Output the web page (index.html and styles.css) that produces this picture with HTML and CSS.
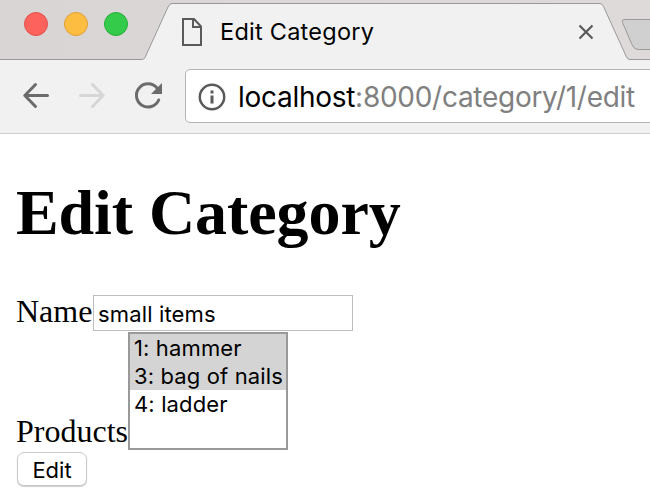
FILE: index.html
```html
<!DOCTYPE html>
<html lang="en">
<head>
<meta charset="utf-8">
<title>Edit Category</title>
<link rel="stylesheet" href="styles.css">
</head>
<body>
<header class="tabstrip">
  <svg class="tabshape" width="650" height="60" viewBox="0 0 650 60" aria-hidden="true">
    <path d="M0 59.500H142Q144 59.500 145 57.500L168 7Q169.700 3.500 172 3.500H600Q602 3.500 603.500 6.500L626.500 57Q627.500 59.500 630 59.500H650V61H0Z" fill="#f1f1f1" stroke="#999"/>
    <path d="M651 19.500H624Q621.500 19.500 622.500 22.500L632 44.500Q634 49.500 638 49.500H651Z" fill="#d0d0d0" stroke="#999"/>
  </svg>
  <div class="lights"><i class="light red"></i><i class="light yellow"></i><i class="light green"></i></div>
  <div class="tab">
    <svg class="page-icon" width="22" height="28" viewBox="0 0 22 28" fill="none" stroke="#5a5a5a" stroke-width="2" aria-hidden="true"><path d="M2 1H13L20 8.500V27H2Z"/><path d="M12 1V9H20"/></svg>
    <span class="tab-title">Edit Category</span>
    <svg class="close" width="16" height="16" viewBox="0 0 16 16" stroke="#5a5a5a" stroke-width="2.200" aria-hidden="true"><path d="M1.500 1.500L14.500 14.500M14.500 1.500L1.500 14.500"/></svg>
  </div>
</header>
<nav class="toolbar">
  <svg class="nav-icons" width="144" height="28" viewBox="0 0 144 28" fill="none" stroke-width="3" stroke-linecap="round" stroke-linejoin="round" aria-hidden="true">
    <path d="M25.500 13.500H3M13.500 2.500L2.800 13.500L13.500 24.500" stroke="#6b6b6b"/>
    <path d="M58.500 13.500H81M70.500 2.500L81.200 13.500L70.500 24.500" stroke="#d6d6d6"/>
    <path d="M136.700 18A11.600 11.600 0 1 1 135 6" stroke="#6b6b6b"/>
    <path d="M140 1V12H129Z" fill="#6b6b6b"/>
  </svg>
  <div class="address">
    <svg class="info" width="28" height="28" viewBox="0 0 28 28" aria-hidden="true"><circle cx="14" cy="14" r="12.200" fill="none" stroke="#5a5a5a" stroke-width="2.500"/><path d="M12.500 7.500h3v3h-3zM12.500 12.500h3v8h-3z" fill="#5a5a5a"/></svg>
    <span class="url"><span class="host">localhost</span>:8000/category/1/edit</span>
  </div>
</nav>
<main>
  <h1>Edit Category</h1>
  <form>
    <div class="row name-row"><label for="name">Name</label><input id="name" type="text" value="small items"></div>
    <div class="row products-row"><span class="label">Products</span>
      <div class="listbox" role="listbox" aria-multiselectable="true">
        <div class="option selected" role="option"><span>1: hammer</span></div>
        <div class="option selected" role="option"><span>3: bag of nails</span></div>
        <div class="option" role="option"><span>4: ladder</span></div>
      </div>
    </div>
    <button type="button">Edit</button>
  </form>
</main>
</body>
</html>
```

FILE: styles.css
```css
* { box-sizing: border-box; }
body {
  margin: 0;
  height: 490px;
  overflow: hidden;
  background: #fff;
  color: #000;
  font: 32px/37px "Liberation Serif", serif;
}
.tabstrip {
  position: relative;
  display: flex;
  height: 60px;
  background: linear-gradient(90deg, #d9d5d4, #dedad9);
}
.tabshape { position: absolute; left: 0; top: 0; }
.lights { display: flex; gap: 16px; padding: 12px 0 0 24px; width: 182px; position: relative; }
.light { width: 24px; height: 24px; border-radius: 50%; border: 1px solid; }
.red { background: #fd625d; border-color: #e24f4b; }
.yellow { background: #fdbd41; border-color: #e0a033; }
.green { background: #34cb4a; border-color: #25ad37; }
.tab { position: relative; display: flex; flex: 1; padding-top: 18px; }
.page-icon { margin-left: -1px; }
.tab-title {
  margin-left: 17px;
  width: 357px;
  font: 23.500px/28px Inter, sans-serif;
  letter-spacing: 0.250px;
}
.close { margin: 6px 0 0 1px; }
.toolbar {
  display: flex;
  height: 74px;
  padding: 9px 0 0 22px;
  background: #f1f1f1;
  border-bottom: 1px solid #cdcdcd;
}
.nav-icons { flex: none; margin-top: 13px; }
.address {
  display: flex;
  flex: none;
  width: 490px;
  height: 54px;
  margin-left: 19px;
  padding-left: 12px;
  border: 1px solid #b5b5b5;
  border-radius: 5px;
  background: #fff;
}
.info { flex: none; margin-top: 13px; }
.url {
  margin-left: 12px;
  font: 28px/54px Inter, sans-serif;
  letter-spacing: -0.280px;
  white-space: nowrap;
  color: #808080;
}
.host { color: #000; }
main { padding: 42px 16px 0; }
h1 { margin: 0; font-size: 64px; line-height: 74px; letter-spacing: -0.080px; }
form { padding-top: 45px; }
.row { display: flex; }
.name-row { height: 37px; }
.name-row label { width: 77px; line-height: 32px; }
input {
  width: 260px;
  height: 36px;
  padding: 2px 5px 0 4px;
  border: 1px solid #bdbdbd;
  border-radius: 0;
  outline: 0;
  font: 22px Inter, sans-serif;
  letter-spacing: 0.150px;
}
.products-row { height: 120px; }
.products-row .label { width: 112px; padding-top: 81px; }
.listbox {
  width: 160px;
  height: 118px;
  border: 2px solid #999;
  font: 22px/28px Inter, sans-serif;
  letter-spacing: 0.130px;
  white-space: nowrap;
}
.option { height: 28px; padding-left: 4px; }
.selected { background: #d4d4d4; }
button {
  display: block;
  width: 70px;
  height: 34px;
  margin-left: 1px;
  padding: 1px 0 0;
  border: 1px solid #c9c9c9;
  border-radius: 7px;
  background: #fff;
  box-shadow: 0 1px 1px #ccc;
  color: #000;
  font: 22px/30px Inter, sans-serif;
}
```
